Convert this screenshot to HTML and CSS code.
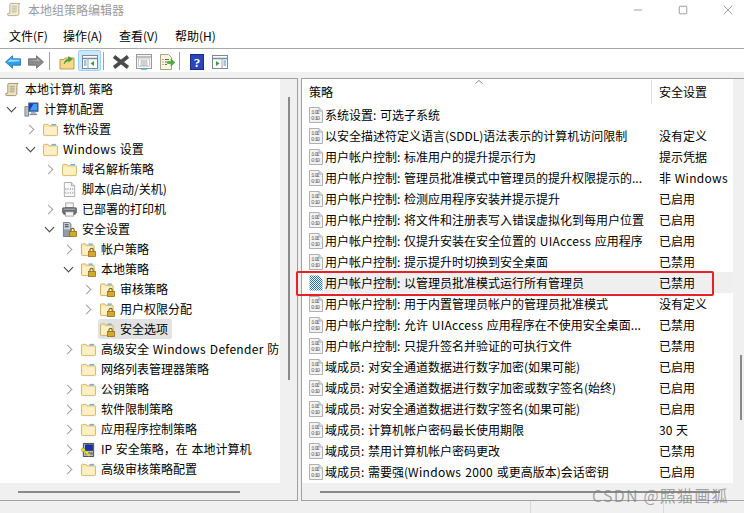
FILE: index.html
```html
<!DOCTYPE html>
<html lang="zh-CN">
<head>
<meta charset="utf-8">
<title>本地组策略编辑器</title>
<link rel="stylesheet" href="styles.css">
</head>
<body>
<svg class="defs" width="0" height="0" aria-hidden="true">
  <defs>
    <pattern id="dither" width="2" height="2" patternUnits="userSpaceOnUse">
      <rect width="2" height="2" fill="#ffffff"/>
      <rect width="1" height="1" fill="#1f6fd0"/>
      <rect x="1" y="1" width="1" height="1" fill="#1f6fd0"/>
    </pattern>
    <symbol id="scroll" viewBox="0 0 16 16">
      <path d="M4 1.500h10c-1 .7-1.300 1.600-1.300 3V12c0 1.500-.8 2.500-2.200 2.500H2c-1 0-1.500-.6-1.500-1.300S1 12 2 12h1V3c0-.8.300-1.500 1-1.500z" fill="#f1e4bd" stroke="#8f8466" stroke-width=".9"/>
      <path d="M5 4.500h5.500M5 6.500h5.500M5 8.500h5.500M5 10.500h5" stroke="#8a8a80" stroke-width=".8"/>
    </symbol>
    <symbol id="computer" viewBox="0 0 16 16">
      <rect x="1" y="5" width="4" height="10" fill="#b9c3cc" stroke="#5b6a78" stroke-width=".8"/>
      <rect x="5" y="1" width="10" height="9" fill="#1538c8" stroke="#60707e" stroke-width="1"/>
      <path d="M6 9l4-7h4v7z" fill="#3fa0ee"/>
      <rect x="7.500" y="10.500" width="5" height="2" fill="#a6b1bb"/>
      <rect x="6" y="12.500" width="8" height="1.500" fill="#7e8a95"/>
    </symbol>
    <symbol id="folder" viewBox="0 0 16 16">
      <path d="M.5 3.500c0-.6.4-1 1-1h4l1 1.500h8c.6 0 1 .4 1 1v8.500c0 .6-.4 1-1 1h-13c-.6 0-1-.4-1-1z" fill="#fbe7a8" stroke="#cfae6a" stroke-width=".9"/>
      <path d="M1.500 5.500h13v8h-13z" fill="#fdf0c4"/>
      <rect x="9" y="2" width="5" height="1.600" fill="#6fb2e6"/>
    </symbol>
    <symbol id="folderlock" viewBox="0 0 16 16">
      <path d="M.5 3c0-.6.4-1 1-1h3.500l1 1.500h7c.6 0 1 .4 1 1v9c0 .6-.4 1-1 1h-11.500c-.6 0-1-.4-1-1z" fill="#fbe7a8" stroke="#c7a661" stroke-width=".9"/>
      <path d="M1.500 5h11v8.500h-11z" fill="#fdf0c4"/>
      <rect x="8" y="1.500" width="4.500" height="1.600" fill="#6fb2e6"/>
      <path d="M9.500 10V8.500c0-2.200 3.500-2.200 3.500 0V10" fill="none" stroke="#7a6320" stroke-width="1.200"/>
      <rect x="8" y="10" width="7.500" height="5.500" fill="#d6a92c" stroke="#8a6a16" stroke-width=".8"/>
    </symbol>
    <symbol id="script" viewBox="0 0 16 16">
      <path d="M2.500.5h7.500l3.500 3.500v11.500h-11z" fill="#f9f9f9" stroke="#a8a8a8"/>
      <path d="M10 .5v3.500h3.500" fill="#e6e6e6" stroke="#a8a8a8"/>
      <path d="M4.500 6.500l-.8 1 .8 1M6 6.500l.8 1-.8 1M9.500 6.500l-.8 1 .8 1M11 6.500l.8 1-.8 1M4.500 10.500l-.8 1 .8 1M6 10.500l.8 1-.8 1M9.500 10.500l-.8 1 .8 1M11 10.500l.8 1-.8 1" fill="none" stroke="#8a8a8a" stroke-width=".8"/>
    </symbol>
    <symbol id="printer" viewBox="0 0 16 16">
      <rect x="4" y="1" width="8" height="5" fill="#f4f4f4" stroke="#8c8c8c" stroke-width=".8"/>
      <rect x=".5" y="6" width="15" height="6" rx="1" fill="#6a6e72" stroke="#4a4d50" stroke-width=".6"/>
      <rect x="2" y="7" width="12" height="1.500" fill="#9ea3a8"/>
      <rect x="3.500" y="10.500" width="9" height="4.500" fill="#f8f8f8" stroke="#8c8c8c" stroke-width=".8"/>
      <rect x="1.500" y="12" width="2" height="1.500" fill="#4a4d50"/>
      <rect x="12.500" y="12" width="2" height="1.500" fill="#4a4d50"/>
    </symbol>
    <symbol id="serverlock" viewBox="0 0 16 16">
      <path d="M1.500.5h6l2 1.500v13.500h-8z" fill="#c8d0d6" stroke="#5f6b75" stroke-width=".9"/>
      <path d="M3 3h4M3 5h4" stroke="#33414d" stroke-width="1.100"/>
      <path d="M2 8h6.500v7h-6.500z" fill="#8f9ba5"/>
      <path d="M9.500 10V8.500c0-2.200 3.500-2.200 3.500 0V10" fill="none" stroke="#7a6320" stroke-width="1.200"/>
      <rect x="8" y="10" width="7.500" height="5.500" fill="#d6a92c" stroke="#8a6a16" stroke-width=".8"/>
    </symbol>
    <symbol id="ipkey" viewBox="0 0 16 16">
      <path d="M2.500 1.500h11v14h-11z" fill="#b6bcc0" stroke="#3d4347" stroke-width="1"/>
      <rect x="4.500" y="3" width="8" height="6" fill="#1a2fb8" stroke="#222" stroke-width=".6"/>
      <rect x="4.500" y="11" width="8" height="2.500" fill="#6f767c"/>
      <path d="M1.500 7.500l7.500 7.500M6 12l1.500-1.500M8 14l1.500-1.500" stroke="#f1e11c" stroke-width="1.600" fill="none"/>
      <circle cx="2.500" cy="8.500" r="2" fill="#f1e11c" stroke="#8a8110" stroke-width=".5"/>
    </symbol>
    <symbol id="policy" viewBox="0 0 14 16">
      <path d="M.5.500h9.500l3.500 3.500v11.500h-13z" fill="#f3f3f3" stroke="#b0b0b0"/>
      <path d="M10 .5v3.500h3.500" fill="#dedede" stroke="#b0b0b0"/>
      <text class="bits" x="2" y="7">10</text>
      <text class="bits" x="7" y="7">1</text>
      <text class="bits" x="2" y="13">01</text>
      <text class="bits" x="7.500" y="13">0</text>
    </symbol>
    <symbol id="policysel" viewBox="0 0 14 16">
      <path d="M.5.500h9.500l3.500 3.500v11.500h-13z" fill="url(#dither)"/>
    </symbol>
  </defs>
</svg>

<div class="window">
  <header class="titlebar">
    <svg class="title-icon"><use href="#scroll"/></svg>
    <span class="title-text">本地组策略编辑器</span>
    <div class="controls">
      <svg class="ctl" viewBox="0 0 12 12"><path d="M1 6h10" stroke="#8c8c8c" fill="none"/></svg>
      <svg class="ctl" viewBox="0 0 12 12"><rect x="1.500" y="1.500" width="9" height="9" rx="1" stroke="#8c8c8c" fill="none"/></svg>
      <svg class="ctl" viewBox="0 0 12 12"><path d="M1 1l10 10M11 1L1 11" stroke="#8c8c8c" fill="none"/></svg>
    </div>
  </header>

  <nav class="menubar">
    <span class="menu m1">文件(F)</span>
    <span class="menu m2">操作(A)</span>
    <span class="menu m3">查看(V)</span>
    <span class="menu m4">帮助(H)</span>
  </nav>

  <div class="toolbar">
    <span class="tb"><svg class="tbi" viewBox="0 0 16 14"><path d="M.5 7L7.500.8v3h8v6.400h-8v3z" fill="#2f9fe8" stroke="#1f6fb0" stroke-width=".8"/><path d="M2.500 7l4-3.500v1.300h8v1.500z" fill="#9fdcfb"/></svg></span>
    <span class="tb"><svg class="tbi" viewBox="0 0 16 14"><path d="M15.500 7L8.500.8v3h-8v6.400h8v3z" fill="#8b8b8b" stroke="#636363" stroke-width=".8"/><path d="M1.500 5h7.500V3.500l3 2.500z" fill="#bcbcbc"/></svg></span>
    <span class="tsep"></span>
    <span class="tb"><svg class="tbi" viewBox="0 0 16 16"><path d="M1 5.500h4l1-1.500h9v11H1z" fill="#f6d98a" stroke="#b8933f" stroke-width=".9"/><path d="M5 10c.5-3 2-4.500 4.500-5V2.500L13.500 5 9.500 8V6.500C8 7 6.500 8 5 10z" fill="#3ea83a" stroke="#2a7f2a" stroke-width=".4"/></svg></span>
    <span class="tb active"><svg class="tbi" viewBox="0 0 16 16"><rect x=".5" y="1.500" width="15" height="13" fill="#fff" stroke="#7c8a96"/><path d="M.5 4.500h15" stroke="#7c8a96" stroke-width="1.500"/><path d="M6 4.500v10" stroke="#9aa6b0"/><path d="M2 7h2.500M2 9h2.500M2 11h2.500" stroke="#3d8bd0"/><path d="M12 7v5L8.500 9.500z" fill="#2fa53a"/></svg></span>
    <span class="tsep"></span>
    <span class="tb"><svg class="tbi big" viewBox="0 0 18 16"><path d="M2 2.500l14 11M16 2.500l-14 11" stroke="#4a4a4a" stroke-width="3.600" fill="none"/></svg></span>
    <span class="tb"><svg class="tbi" viewBox="0 0 16 16"><rect x=".5" y=".5" width="15" height="14" fill="#f4f4f4" stroke="#9a9a9a"/><path d="M.5 3h15" stroke="#9a9a9a" stroke-width="1.200"/><rect x="2.500" y="5" width="11" height="7" fill="#fff" stroke="#b5b5b5" stroke-width=".7"/><path d="M4.500 7h7M4.500 9h7M4.500 11h7" stroke="#7a7a7a" stroke-width=".7"/><rect x="5" y="14.500" width="6" height="1.200" fill="#3fa6e0"/></svg></span>
    <span class="tb"><svg class="tbi" viewBox="0 0 16 16"><path d="M1.500.5h8l3 3v12h-11z" fill="#fbf6dc" stroke="#a7a38b"/><path d="M3.500 5.500h1M6 5.500h4M3.500 8h1M6 8h2M3.500 10.500h1M6 10.500h2" stroke="#555" stroke-width=".9"/><path d="M8.500 7.500h3.500V5l4 3.500-4 3.500V9.500H8.500z" fill="#4db33d" stroke="#2d8a2d" stroke-width=".5"/></svg></span>
    <span class="tsep wide"></span>
    <span class="tb"><svg class="tbi" viewBox="0 0 14 16"><rect x=".5" y=".5" width="13" height="15" fill="#2a46b8" stroke="#1b2f85"/><text class="help" x="7" y="12.500">?</text></svg></span>
    <span class="tb"><svg class="tbi" viewBox="0 0 16 16"><rect x=".5" y="1.500" width="15" height="13" fill="#fff" stroke="#7c8a96"/><path d="M.5 4.500h15" stroke="#7c8a96" stroke-width="1.500"/><path d="M10 4.500v10" stroke="#9aa6b0"/><path d="M11.500 7H14M11.500 9H14M11.500 11H14" stroke="#3d8bd0"/><path d="M4 7v5l3.500-2.500z" fill="#2fa53a"/></svg></span>
  </div>

  <main class="panes">
    <section class="pane tree-pane">
      <div class="tree-body">
        <ul class="tree">
          <li class="node l0"><svg class="ico"><use href="#scroll"/></svg><span class="lbl">本地计算机 策略</span></li>
          <li class="node l1"><i class="chev open"></i><svg class="ico"><use href="#computer"/></svg><span class="lbl">计算机配置</span></li>
          <li class="node l2"><i class="chev"></i><svg class="ico"><use href="#folder"/></svg><span class="lbl">软件设置</span></li>
          <li class="node l2"><i class="chev open"></i><svg class="ico"><use href="#folder"/></svg><span class="lbl"><span class="lat">Windows</span> 设置</span></li>
          <li class="node l3"><i class="chev"></i><svg class="ico"><use href="#folder"/></svg><span class="lbl">域名解析策略</span></li>
          <li class="node l3"><i class="chev none"></i><svg class="ico"><use href="#script"/></svg><span class="lbl">脚本(启动/关机)</span></li>
          <li class="node l3"><i class="chev"></i><svg class="ico"><use href="#printer"/></svg><span class="lbl">已部署的打印机</span></li>
          <li class="node l3"><i class="chev open"></i><svg class="ico"><use href="#serverlock"/></svg><span class="lbl">安全设置</span></li>
          <li class="node l4"><i class="chev"></i><svg class="ico"><use href="#folderlock"/></svg><span class="lbl">帐户策略</span></li>
          <li class="node l4"><i class="chev open"></i><svg class="ico"><use href="#folderlock"/></svg><span class="lbl">本地策略</span></li>
          <li class="node l5"><i class="chev"></i><svg class="ico"><use href="#folderlock"/></svg><span class="lbl">审核策略</span></li>
          <li class="node l5"><i class="chev"></i><svg class="ico"><use href="#folderlock"/></svg><span class="lbl">用户权限分配</span></li>
          <li class="node l5 selected"><i class="chev none"></i><span class="sel-box"><svg class="ico"><use href="#folderlock"/></svg><span class="lbl">安全选项</span></span></li>
          <li class="node l4"><i class="chev"></i><svg class="ico"><use href="#folder"/></svg><span class="lbl">高级安全 <span class="lat">Windows Defender</span> 防</span></li>
          <li class="node l4"><i class="chev none"></i><svg class="ico"><use href="#folder"/></svg><span class="lbl">网络列表管理器策略</span></li>
          <li class="node l4"><i class="chev"></i><svg class="ico"><use href="#folder"/></svg><span class="lbl">公钥策略</span></li>
          <li class="node l4"><i class="chev"></i><svg class="ico"><use href="#folder"/></svg><span class="lbl">软件限制策略</span></li>
          <li class="node l4"><i class="chev"></i><svg class="ico"><use href="#folder"/></svg><span class="lbl">应用程序控制策略</span></li>
          <li class="node l4"><i class="chev"></i><svg class="ico"><use href="#ipkey"/></svg><span class="lbl">IP 安全策略，在 本地计算机</span></li>
          <li class="node l4"><i class="chev"></i><svg class="ico"><use href="#folder"/></svg><span class="lbl">高级审核策略配置</span></li>
        </ul>
        <div class="vtrack"><span class="vthumb tree-thumb"></span></div>
      </div>
      <div class="htrack"><span class="hthumb tree-hthumb"></span></div>
    </section>

    <section class="pane list-pane">
      <div class="list-body">
        <div class="list">
          <div class="list-head">
            <span class="col-name">策略<svg class="sort" viewBox="0 0 8 4"><path d="M.5 3.500L4 .5l3.500 3" fill="none" stroke="#8a8a8a"/></svg></span>
            <span class="col-val">安全设置</span>
          </div>
          <div class="row"><svg class="pico"><use href="#policy"/></svg><span class="name">系统设置: 可选子系统</span><span class="val"></span></div>
          <div class="row"><svg class="pico"><use href="#policy"/></svg><span class="name">以安全描述符定义语言(SDDL)语法表示的计算机访问限制</span><span class="val">没有定义</span></div>
          <div class="row"><svg class="pico"><use href="#policy"/></svg><span class="name">用户帐户控制: 标准用户的提升提示行为</span><span class="val">提示凭据</span></div>
          <div class="row"><svg class="pico"><use href="#policy"/></svg><span class="name">用户帐户控制: 管理员批准模式中管理员的提升权限提示的...</span><span class="val">非 <span class="lat">Windows</span></span></div>
          <div class="row"><svg class="pico"><use href="#policy"/></svg><span class="name">用户帐户控制: 检测应用程序安装并提示提升</span><span class="val">已启用</span></div>
          <div class="row"><svg class="pico"><use href="#policy"/></svg><span class="name">用户帐户控制: 将文件和注册表写入错误虚拟化到每用户位置</span><span class="val">已启用</span></div>
          <div class="row"><svg class="pico"><use href="#policy"/></svg><span class="name">用户帐户控制: 仅提升安装在安全位置的 <span class="lat">UIAccess</span> 应用程序</span><span class="val">已启用</span></div>
          <div class="row"><svg class="pico"><use href="#policy"/></svg><span class="name">用户帐户控制: 提示提升时切换到安全桌面</span><span class="val">已禁用</span></div>
          <div class="row current"><svg class="pico"><use href="#policysel"/></svg><span class="name">用户帐户控制: 以管理员批准模式运行所有管理员</span><span class="val">已禁用</span></div>
          <div class="row"><svg class="pico"><use href="#policy"/></svg><span class="name">用户帐户控制: 用于内置管理员帐户的管理员批准模式</span><span class="val">没有定义</span></div>
          <div class="row"><svg class="pico"><use href="#policy"/></svg><span class="name">用户帐户控制: 允许 <span class="lat">UIAccess</span> 应用程序在不使用安全桌面...</span><span class="val">已禁用</span></div>
          <div class="row"><svg class="pico"><use href="#policy"/></svg><span class="name">用户帐户控制: 只提升签名并验证的可执行文件</span><span class="val">已禁用</span></div>
          <div class="row"><svg class="pico"><use href="#policy"/></svg><span class="name">域成员: 对安全通道数据进行数字加密(如果可能)</span><span class="val">已启用</span></div>
          <div class="row"><svg class="pico"><use href="#policy"/></svg><span class="name">域成员: 对安全通道数据进行数字加密或数字签名(始终)</span><span class="val">已启用</span></div>
          <div class="row"><svg class="pico"><use href="#policy"/></svg><span class="name">域成员: 对安全通道数据进行数字签名(如果可能)</span><span class="val">已启用</span></div>
          <div class="row"><svg class="pico"><use href="#policy"/></svg><span class="name">域成员: 计算机帐户密码最长使用期限</span><span class="val">30 天</span></div>
          <div class="row"><svg class="pico"><use href="#policy"/></svg><span class="name">域成员: 禁用计算机帐户密码更改</span><span class="val">已禁用</span></div>
          <div class="row"><svg class="pico"><use href="#policy"/></svg><span class="name">域成员: 需要强(<span class="lat">Windows 2000</span> 或更高版本)会话密钥</span><span class="val">已启用</span></div>
        </div>
        <div class="vtrack narrow"><span class="vthumb list-thumb"></span></div>
      </div>
      <div class="htrack"><span class="hthumb list-hthumb"></span></div>
    </section>
  </main>

  <footer class="status">
    <span class="st st1"></span>
    <span class="st st2"></span>
    <span class="st st3"></span>
  </footer>

  <div class="redbox"></div>
  <div class="watermark">CSDN @照猫画狐</div>
</div>
</body>
</html>
```

FILE: styles.css
```css
* { box-sizing: border-box; }
html, body { margin: 0; padding: 0; width: 744px; height: 513px; overflow: hidden; background: #f0f0f0; }
body { font-family: "Noto Sans CJK SC", "Noto Sans", sans-serif; font-size: 12px; color: #000; word-spacing: 1px; }
.defs { position: absolute; }
.window { position: relative; display: flex; flex-direction: column; width: 744px; height: 513px; }
.lat { letter-spacing: .3px; }

.titlebar { display: flex; align-items: center; height: 26px; background: #fff; padding: 0 0 7px 7px; }
.title-icon { width: 15px; height: 15px; opacity: .75; }
.title-text { margin-left: 6px; color: #9c9c9c; font-size: 12px; line-height: 16px; }
.controls { margin-left: auto; display: flex; align-items: center; gap: 35px; padding-right: 11px; }
.ctl { width: 10px; height: 10px; display: block; }

.menubar { display: flex; align-items: center; height: 23px; background: #fff; border-bottom: 1px solid #a8a8a8; padding-bottom: 2px; }
.menu { line-height: 16px; white-space: nowrap; }
.m1 { margin-left: 9px; width: 54px; }
.m2 { width: 56px; }
.m3 { width: 56px; }

.toolbar { display: flex; align-items: flex-start; height: 23px; background: #fff; padding: 1px 0 0 1px; }
.tb { width: 23px; height: 21px; display: flex; align-items: center; justify-content: center; border: 1px solid transparent; }
.tb.active { background: #cce8ff; border: 1px solid #99d1ff; border-radius: 2px; }
.tbi { width: 16px; height: 16px; display: block; margin-top: 3px; }
.tbi.big { width: 18px; }
.tsep { width: 1px; height: 18px; background: #a0a0a0; margin: 2px 5px 0 2px; }
.tsep.wide { margin-left: 1px; margin-right: 5px; }
.help { font: bold 13px "Liberation Serif", serif; fill: #fff; text-anchor: middle; }

.panes { display: flex; gap: 3px; height: 423px; margin-top: 6px; padding-left: 0; }
.pane { display: flex; flex-direction: column; background: #f0f0f0; border-top: 1px solid #a0a0a0; border-bottom: 1px solid #a0a0a0; }
.tree-pane { width: 298px; border-right: 1px solid #a0a0a0; }
.list-pane { width: 443px; border-left: 1px solid #a0a0a0; }

.tree-body, .list-body { display: flex; flex: 1; min-height: 0; }
.tree { list-style: none; margin: 0; padding: 0; width: 280px; background: #fff; overflow: hidden; }
.node { display: flex; align-items: center; height: 20px; white-space: nowrap; }
.l0 { padding-left: 5px; }
.l1 { padding-left: 6px; }
.l2 { padding-left: 25px; }
.l3 { padding-left: 44px; }
.l4 { padding-left: 63px; }
.l5 { padding-left: 82px; }
.chev { display: block; flex: none; width: 10px; height: 10px; position: relative; margin-right: 8px; }
.chev::before { content: ""; position: absolute; left: 1px; top: 2px; width: 6px; height: 6px; border-top: 1.500px solid #a0a0a0; border-right: 1.500px solid #a0a0a0; transform: rotate(45deg); }
.chev.open::before { left: 2px; top: 0; border-color: #404040; transform: rotate(135deg); }
.chev.none::before { display: none; }
.ico { flex: none; width: 15px; height: 15px; display: block; }
.lbl { margin-left: 5px; line-height: 16px; letter-spacing: 0; }
.selected .sel-box { display: flex; align-items: center; height: 20px; background: #e2e2e2; margin-left: -2px; padding: 0 4px 0 2px; border-radius: 2px; }

.vtrack { flex: 1; position: relative; background: #f0f0f0; display: flex; justify-content: center; }
.vthumb { display: block; width: 2px; background: #8a8a8a; }
.tree-thumb { height: 283px; margin-top: 18px; }
.list-body .vtrack { justify-content: flex-end; padding-right: 2px; }
.list-thumb { height: 65px; margin-top: 276px; }

.htrack { height: 17px; background: #f0f0f0; display: flex; align-items: center; }
.hthumb { display: block; height: 2px; background: #8a8a8a; }
.tree-hthumb { width: 222px; margin-left: 18px; }
.list-hthumb { width: 400px; margin-left: 18px; }

.list { width: 431px; background: #fff; flex: none; }
.list-head { display: flex; height: 25px; align-items: center; }
.col-name { position: relative; width: 350px; padding-left: 7px; height: 24px; display: flex; align-items: center; border-right: 1px solid #dedede; }
.col-val { padding-left: 7px; }
.sort { position: absolute; left: 173px; top: 0; width: 8px; height: 4px; }
.row { display: flex; align-items: center; height: 21px; white-space: nowrap; }
.pico { flex: none; width: 14px; height: 16px; margin-left: 7px; display: block; }
.bits { font: 6px "Liberation Mono", monospace; fill: #6a6a6a; }
.name { width: 334px; margin-left: 2px; padding-left: 0; flex: none; line-height: 16px; overflow: hidden; }
.val { padding-left: 0; line-height: 16px; }
.current { background: linear-gradient(to right, #fff 22px, #efefef 22px); }

.status { display: flex; flex: 1; background: #f0f0f0; }
.st { display: block; height: 100%; border-right: 1px solid #d9d9d9; }
.st1 { width: 531px; }
.st2 { width: 133px; }
.st3 { border-right: 0; flex: 1; }

.redbox { position: absolute; left: 296px; top: 271px; width: 418px; height: 25px; border: 2px solid #e8202a; border-radius: 2px; pointer-events: none; }
.watermark { position: absolute; left: 592px; top: 484px; font-size: 16px; line-height: 22px; letter-spacing: 1.200px; word-spacing: 0; color: rgba(125,125,125,.7); white-space: nowrap; }
```
